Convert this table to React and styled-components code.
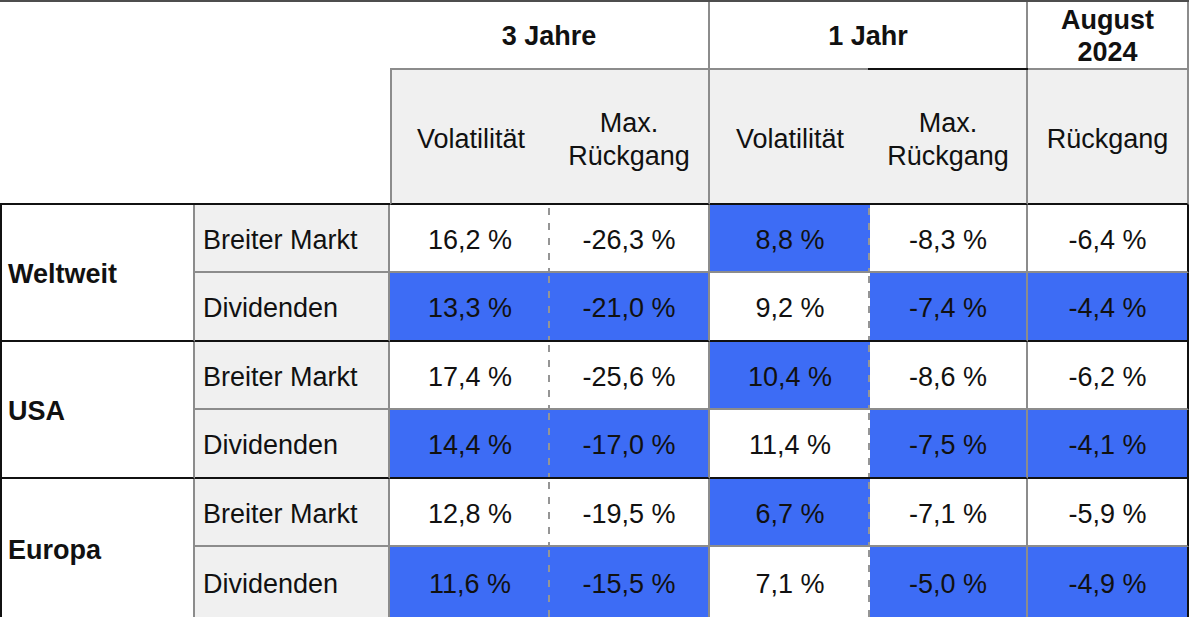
import React from 'react'
import styled, { createGlobalStyle, css } from 'styled-components'

const GlobalStyle = createGlobalStyle`
  html, body {
    margin: 0;
    padding: 0;
    background: #ffffff;
    overflow: hidden;
  }
  * {
    box-sizing: border-box;
  }
`

const LINE = '#8c8c8c'
const DARK = '#111111'
const SHADE = '#f0f0f0'
const BLUE = '#3d6cf5'

const Table = styled.div`
  width: 1189px;
  height: 617px;
  display: grid;
  grid-template-columns: 195px 195px 160px 160px 160px 158px 161px;
  grid-template-rows: 68px 135px 68px 69px 68px 69px 68px 70px;
  border-top: 2px solid #4d4d4d;
  font-family: "Liberation Sans", Arial, Helvetica, sans-serif;
  font-size: 27px;
  color: ${DARK};
`

const Cell = styled.div`
  display: flex;
  align-items: center;
  justify-content: center;
  text-align: center;
  padding-top: 4px;
`

const Corner = styled.div`
  grid-column: 1 / 3;
  grid-row: 1 / 3;
  border-bottom: 2px solid ${DARK};
`

const PeriodCell = styled(Cell)`
  position: relative;
  grid-column: span ${({ $span }) => $span};
  font-weight: bold;
  line-height: 32px;
  padding-top: 2px;
  border-bottom: 2px solid ${LINE};
  border-right: 2px solid ${LINE};
  ${({ $marked }) => $marked && css`
    &::after {
      content: '';
      position: absolute;
      left: 50%;
      right: -2px;
      bottom: -2px;
      height: 2px;
      background: ${DARK};
    }
  `}
`

const MetricCell = styled(Cell)`
  background: ${SHADE};
  line-height: 33px;
  padding-top: 6px;
  border-bottom: 2px solid ${DARK};
  ${({ $left }) => $left && css`border-left: 2px solid ${LINE};`}
  ${({ $right }) => $right && css`border-right: 2px solid ${LINE};`}
`

const rowBottom = ({ $groupEnd, $last }) => {
  if ($last) return 'none'
  return `2px solid ${$groupEnd ? DARK : LINE}`
}

const RegionCell = styled.div`
  grid-row: span 2;
  display: flex;
  align-items: center;
  padding: 4px 0 0 6px;
  font-weight: bold;
  border-left: 2px solid ${DARK};
  border-right: 2px solid ${LINE};
  border-bottom: ${rowBottom};
`

const LabelCell = styled.div`
  display: flex;
  align-items: center;
  padding: 4px 0 0 8px;
  background: ${SHADE};
  border-right: 2px solid ${LINE};
  border-bottom: ${rowBottom};
`

const ValueCell = styled(Cell)`
  background: ${({ $blue }) => ($blue ? BLUE : '#ffffff')};
  border-bottom: ${rowBottom};
  border-right: 2px solid ${({ $edge }) => ($edge === 'outer' ? DARK : LINE)};
  ${({ $edge }) => $edge === 'dashed' && css`
    border-right: none;
    background-image: linear-gradient(#959595 50%, transparent 50%);
    background-size: 2px 15px;
    background-repeat: repeat-y;
    background-position: right 3px;
  `}
`

const edges = ['dashed', 'solid', 'dashed', 'solid', 'outer']

const groups = [
  {
    region: 'Weltweit',
    rows: [
      { label: 'Breiter Markt', values: ['16,2 %', '-26,3 %', '8,8 %', '-8,3 %', '-6,4 %'] },
      { label: 'Dividenden', values: ['13,3 %', '-21,0 %', '9,2 %', '-7,4 %', '-4,4 %'] },
    ],
  },
  {
    region: 'USA',
    rows: [
      { label: 'Breiter Markt', values: ['17,4 %', '-25,6 %', '10,4 %', '-8,6 %', '-6,2 %'] },
      { label: 'Dividenden', values: ['14,4 %', '-17,0 %', '11,4 %', '-7,5 %', '-4,1 %'] },
    ],
  },
  {
    region: 'Europa',
    rows: [
      { label: 'Breiter Markt', values: ['12,8 %', '-19,5 %', '6,7 %', '-7,1 %', '-5,9 %'] },
      { label: 'Dividenden', values: ['11,6 %', '-15,5 %', '7,1 %', '-5,0 %', '-4,9 %'] },
    ],
  },
]

// Breiter Markt rows highlight the 1-year volatility, Dividenden rows the rest
const bluePattern = [
  [false, false, true, false, false],
  [true, true, false, true, true],
]

const App = () => {
  return (
    <>
      <GlobalStyle />
      <Table>
        <Corner />
        <PeriodCell $span={2}>3 Jahre</PeriodCell>
        <PeriodCell $span={2} $marked>1 Jahr</PeriodCell>
        <PeriodCell $span={1}>August<br />2024</PeriodCell>

        <MetricCell $left>Volatilität</MetricCell>
        <MetricCell $right>Max.<br />Rückgang</MetricCell>
        <MetricCell>Volatilität</MetricCell>
        <MetricCell $right>Max.<br />Rückgang</MetricCell>
        <MetricCell $right>Rückgang</MetricCell>

        {groups.map((group, g) => {
          const last = g === groups.length - 1
          return (
            <React.Fragment key={group.region}>
              <RegionCell $groupEnd $last={last}>{group.region}</RegionCell>
              {group.rows.map((row, r) => (
                <React.Fragment key={row.label}>
                  <LabelCell $groupEnd={r === 1} $last={last && r === 1}>
                    {row.label}
                  </LabelCell>
                  {row.values.map((val, i) => (
                    <ValueCell
                      key={i}
                      $blue={bluePattern[r][i]}
                      $edge={edges[i]}
                      $groupEnd={r === 1}
                      $last={last && r === 1}
                    >
                      {val}
                    </ValueCell>
                  ))}
                </React.Fragment>
              ))}
            </React.Fragment>
          )
        })}
      </Table>
    </>
  )
}

export default App
